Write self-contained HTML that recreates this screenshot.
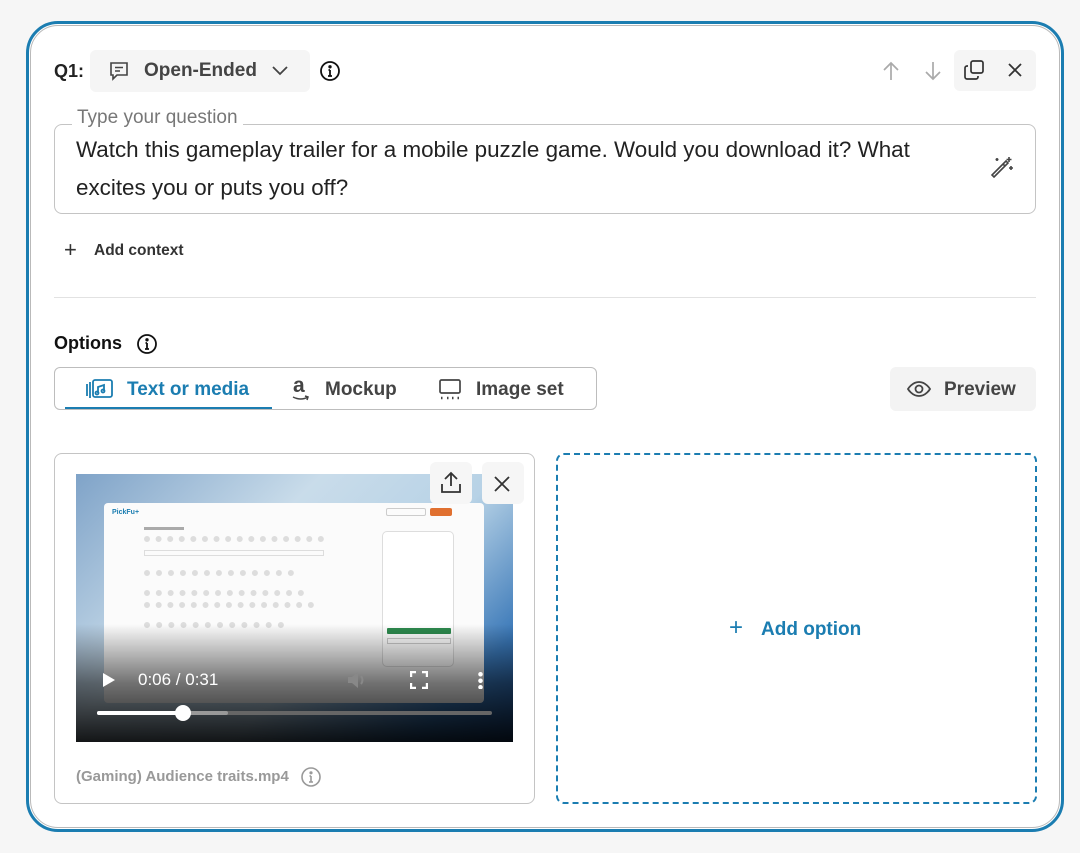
<!DOCTYPE html>
<html><head><meta charset="utf-8"><style>
*{box-sizing:border-box;margin:0;padding:0}
body{width:1080px;height:853px;background:#f6f6f6;font-family:"Liberation Sans",sans-serif;position:relative;overflow:hidden;color:#222}
.outer{position:absolute;left:26px;top:21px;width:1038px;height:811px;border:3px solid #1b7db1;border-radius:32px;background:#fff}
.inner{position:absolute;left:30px;top:25px;width:1030px;height:803px;border:1.5px solid #b9b9b9;border-radius:28px;background:#fff}
.abs{position:absolute}
.b{font-weight:bold}
svg{display:block}
</style></head><body>
<div class="outer"></div><div class="inner"></div>

<div class="abs b" style="left:54px;top:61px;font-size:18px;color:#222">Q1:</div>
<div class="abs" style="left:90px;top:50px;width:220px;height:42px;background:#f5f5f5;border-radius:6px"></div>
<svg class="abs" style="left:107px;top:59px" width="24" height="24" viewBox="0 0 24 24" fill="none" stroke="#444" stroke-width="1.6"><path d="M4 4h16v12H10l-4 4v-4H4z"/><path d="M8 8.5h8M8 12h5"/></svg>
<div class="abs b" style="left:144px;top:60px;font-size:19px;color:#444">Open-Ended</div>
<svg class="abs" style="left:270px;top:62px" width="20" height="18" viewBox="0 0 20 18" fill="none" stroke="#444" stroke-width="1.8"><path d="M3 5l7 7 7-7"/></svg>
<svg class="abs" style="left:319px;top:60px" width="22" height="22" viewBox="0 0 22 22" fill="none" stroke="#111" stroke-width="1.8"><circle cx="11" cy="11" r="9"/><path d="M11 10v6M9 16h4M9.5 10H11" /><circle cx="11" cy="6.8" r="0.8" fill="#111"/></svg>

<svg class="abs" style="left:880px;top:59px" width="22" height="24" viewBox="0 0 22 24" fill="none" stroke="#aaa" stroke-width="1.7"><path d="M11 21V4M4 11l7-7 7 7"/></svg>
<svg class="abs" style="left:922px;top:59px" width="22" height="24" viewBox="0 0 22 24" fill="none" stroke="#aaa" stroke-width="1.7"><path d="M11 3v17M4 13l7 7 7-7"/></svg>
<div class="abs" style="left:954px;top:50px;width:82px;height:41px;background:#f5f5f5;border-radius:6px"></div>
<svg class="abs" style="left:962px;top:58px" width="24" height="24" viewBox="0 0 24 24" fill="none" stroke="#333" stroke-width="1.7"><rect x="9" y="3" width="12" height="12" rx="2"/><path d="M6 8H5a2 2 0 0 0-2 2v9a2 2 0 0 0 2 2h9a2 2 0 0 0 2-2v-1"/></svg>
<svg class="abs" style="left:1005px;top:60px" width="20" height="20" viewBox="0 0 20 20" fill="none" stroke="#333" stroke-width="1.8"><path d="M4 4l12 12M16 4L4 16"/></svg>

<div class="abs" style="left:54px;top:124px;width:982px;height:90px;border:1.5px solid #c4c4c4;border-radius:8px"></div>
<div class="abs" style="left:72px;top:107px;background:#fff;padding:0 5px;font-size:19px;color:#777">Type your question</div>
<div class="abs" style="left:76px;top:131px;width:900px;font-size:22.4px;line-height:38px;color:#222">Watch this gameplay trailer for a mobile puzzle game. Would you download it? What excites you or puts you off?</div>
<svg class="abs" style="left:989px;top:155px" width="26" height="26" viewBox="0 0 26 26" fill="none" stroke="#444" stroke-width="1.6"><path d="M5 22L19 8l-2-2L3 20zM14 9l2 2"/><path d="M20 2v5M17.5 4.5h5M22 11v4M20 13h4M8 3v3M6.5 4.5h3"/></svg>

<div class="abs" style="left:64px;top:237px;font-size:22px;color:#333">+</div>
<div class="abs b" style="left:94px;top:242px;font-size:15.5px;color:#333">Add context</div>

<div class="abs" style="left:54px;top:297px;width:982px;height:1px;background:#e2e2e2"></div>

<div class="abs b" style="left:54px;top:333px;font-size:18px;color:#111">Options</div>
<svg class="abs" style="left:136px;top:333px" width="22" height="22" viewBox="0 0 22 22" fill="none" stroke="#111" stroke-width="1.8"><circle cx="11" cy="11" r="9"/><path d="M11 10v6M9 16h4M9.5 10H11"/><circle cx="11" cy="6.8" r="0.8" fill="#111"/></svg>

<div class="abs" style="left:54px;top:367px;width:543px;height:43px;border:1.5px solid #bdbdbd;border-radius:6px"></div>
<div class="abs" style="left:65px;top:407px;width:207px;height:2px;background:#1b7db1"></div>
<svg class="abs" style="left:85px;top:377px" width="30" height="24" viewBox="0 0 30 24" fill="none" stroke="#1b7db1" stroke-width="1.8"><path d="M2 7v12M5 5v16"/><rect x="8" y="3" width="19" height="17" rx="2"/><path d="M13 16v-6l6-2v6"/><circle cx="12" cy="16" r="1.5"/><circle cx="18" cy="14" r="1.5"/></svg>
<div class="abs b" style="left:127px;top:379px;font-size:19px;color:#1b7db1">Text or media</div>
<div class="abs b" style="left:293px;top:374px;font-size:21px;color:#444">a</div>
<svg class="abs" style="left:291px;top:395px" width="20" height="6" viewBox="0 0 20 6" fill="none" stroke="#444" stroke-width="1.5"><path d="M2 2q8 4 15 0M14 1l3 1-1 3"/></svg>
<div class="abs b" style="left:325px;top:379px;font-size:19px;color:#444">Mockup</div>
<svg class="abs" style="left:437px;top:377px" width="26" height="24" viewBox="0 0 26 24" fill="none" stroke="#444" stroke-width="1.7"><rect x="3" y="3" width="20" height="13" rx="1.5"/><path d="M4 21h1.5M10 21h1.5M15 21h1.5M20.5 21h1.5" stroke-width="2.4"/></svg>
<div class="abs b" style="left:476px;top:379px;font-size:19px;color:#444">Image set</div>

<div class="abs" style="left:890px;top:367px;width:146px;height:44px;background:#f3f3f3;border-radius:6px"></div>
<svg class="abs" style="left:906px;top:377px" width="26" height="24" viewBox="0 0 26 24" fill="none" stroke="#444" stroke-width="1.8"><path d="M2 12s4-7 11-7 11 7 11 7-4 7-11 7S2 12 2 12z"/><circle cx="13" cy="12" r="3.5"/></svg>
<div class="abs b" style="left:944px;top:379px;font-size:19px;color:#444">Preview</div>

<div class="abs" style="left:54px;top:453px;width:481px;height:351px;border:1.5px solid #c4c4c4;border-radius:8px"></div>
<div class="abs" style="left:76px;top:474px;width:437px;height:268px;background:linear-gradient(135deg,#7fa3c8 0%,#c9dcea 35%,#b7d2e6 60%,#3a78b8 85%,#1d4f8f 100%);overflow:hidden">
  <div class="abs" style="left:28px;top:29px;width:380px;height:200px;background:#fbfbfb;border-radius:4px">
    <div class="abs" style="left:8px;top:6px;font-size:7px;color:#1b7db1;font-weight:bold">PickFu+</div>
    <div class="abs" style="left:326px;top:5px;width:22px;height:8px;background:#e07030;border-radius:2px"></div>
    <div class="abs" style="left:282px;top:5px;width:40px;height:8px;border:1px solid #ccc;border-radius:2px"></div>
    <div class="abs" style="left:40px;top:20px;width:190px;height:170px;">
      <div style="height:3px;width:40px;background:#aaa;margin:4px 0"></div>
      <div style="height:6px;width:180px;border-top:6px dotted #ddd;margin:6px 0"></div>
      <div style="height:6px;width:180px;border:1px solid #ddd;margin:8px 0"></div>
      <div style="height:6px;width:150px;border-top:6px dotted #ddd;margin:14px 0"></div>
      <div style="height:6px;width:160px;border-top:6px dotted #ddd;margin:6px 0"></div>
      <div style="height:6px;width:170px;border-top:6px dotted #ddd;margin:6px 0"></div>
      <div style="height:6px;width:140px;border-top:6px dotted #ddd;margin:14px 0"></div>
    </div>
    <div class="abs" style="left:278px;top:28px;width:72px;height:136px;border:1px solid #ddd;border-radius:5px;background:#fff">
      <div class="abs" style="left:4px;top:96px;width:64px;height:6px;background:#2d8a4e;border-radius:1px"></div>
      <div class="abs" style="left:4px;top:106px;width:64px;height:6px;border:1px solid #ccc"></div>
    </div>
  </div>
  <div class="abs" style="left:0;top:150px;width:437px;height:118px;background:linear-gradient(rgba(0,0,0,0),rgba(0,0,0,.55) 50%,rgba(0,0,0,.9))"></div>
  <svg class="abs" style="left:26px;top:198px" width="14" height="16" viewBox="0 0 14 16"><path d="M1 1l12 7-12 7z" fill="#fff"/></svg>
  <div class="abs" style="left:62px;top:196px;font-size:17px;color:#fff">0:06 / 0:31</div>
  <svg class="abs" style="left:270px;top:196px" width="22" height="20" viewBox="0 0 22 20"><path d="M2 7h4l6-5v16l-6-5H2z" fill="#888"/><path d="M15 6q3 4 0 8" stroke="#888" stroke-width="2" fill="none"/></svg>
  <svg class="abs" style="left:334px;top:197px" width="18" height="18" viewBox="0 0 18 18" fill="none" stroke="#fff" stroke-width="2.4"><path d="M1 6V1h5M12 1h5v5M17 12v5h-5M6 17H1v-5"/></svg>
  <div class="abs" style="left:402px;top:197px;width:5px;height:18px;background:radial-gradient(circle,#fff 2px,transparent 2.5px) 0 0/5px 6.5px"></div>
  <div class="abs" style="left:21px;top:237px;width:395px;height:4px;background:#666;border-radius:2px"></div>
  <div class="abs" style="left:21px;top:237px;width:131px;height:4px;background:#999;border-radius:2px"></div>
  <div class="abs" style="left:21px;top:237px;width:86px;height:4px;background:#fff;border-radius:2px"></div>
  <div class="abs" style="left:99px;top:231px;width:16px;height:16px;background:#fff;border-radius:50%"></div>
</div>
<div class="abs" style="left:430px;top:462px;width:42px;height:42px;background:#f6f6f6;border-radius:6px"></div>
<svg class="abs" style="left:438px;top:470px" width="26" height="26" viewBox="0 0 26 26" fill="none" stroke="#333" stroke-width="1.8"><path d="M13 16V3M7 9l6-6 6 6M4 14v8h18v-8"/></svg>
<div class="abs" style="left:482px;top:462px;width:42px;height:42px;background:#f6f6f6;border-radius:6px"></div>
<svg class="abs" style="left:493px;top:475px" width="18" height="18" viewBox="0 0 18 18" fill="none" stroke="#333" stroke-width="1.8"><path d="M2 2l14 14M16 2L2 16"/></svg>
<div class="abs b" style="left:76px;top:768px;font-size:15px;color:#999">(Gaming) Audience traits.mp4</div>
<svg class="abs" style="left:300px;top:766px" width="22" height="22" viewBox="0 0 22 22" fill="none" stroke="#999" stroke-width="1.6"><circle cx="11" cy="11" r="9"/><path d="M11 10v6M9 16h4M9.5 10H11"/><circle cx="11" cy="6.8" r="0.8" fill="#999"/></svg>

<div class="abs" style="left:556px;top:453px;width:481px;height:351px;border:2.5px dashed #1b7db1;border-radius:8px"></div>
<div class="abs" style="left:729px;top:614px;font-size:24px;color:#1b7db1">+</div>
<div class="abs b" style="left:761px;top:619px;font-size:19px;color:#1b7db1">Add option</div>
</body></html>
